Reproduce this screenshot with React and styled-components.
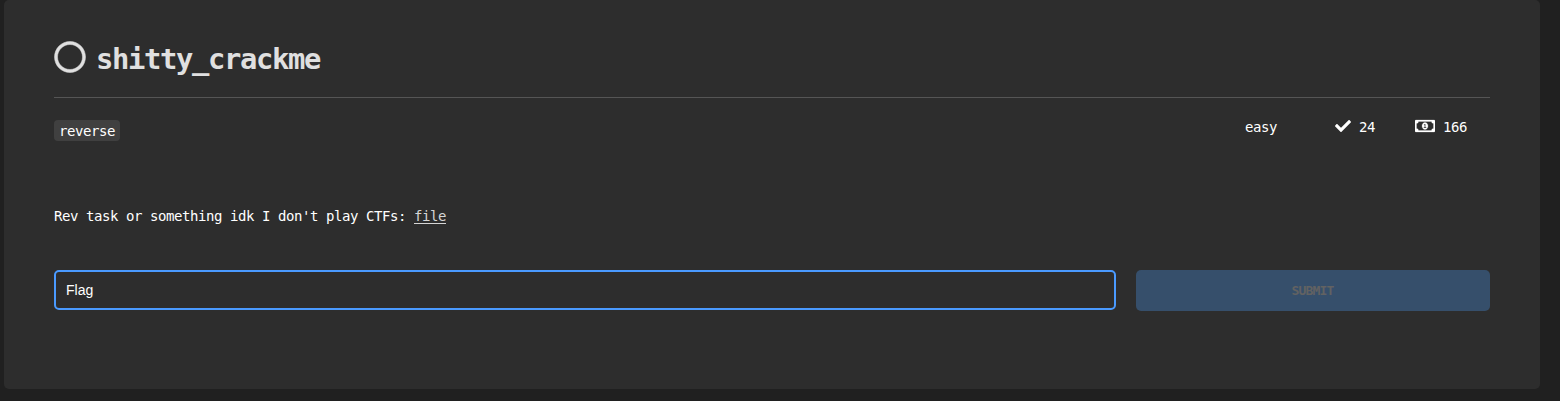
import React from 'react';
import styled, { createGlobalStyle } from 'styled-components';
import { FaCheck, FaRegCircle, FaRegMoneyBillAlt } from 'react-icons/fa';

const GlobalStyle = createGlobalStyle`
  *, *::before, *::after { box-sizing: border-box; }
  body {
    margin: 0;
    height: 401px;
    overflow: hidden;
    background: #202020;
    color: #fff;
    font: 14px/20px "DejaVu Sans Mono", "Liberation Mono", monospace;
    letter-spacing: -0.429px;
  }
`;

const Card = styled.main`
  width: 1536px;
  height: 389px;
  margin: 0 20px 0 4px;
  padding: 0 50px;
  border-radius: 5px;
  background: #2d2d2d;
`;

const Header = styled.header`
  display: flex;
  height: 98px;
  padding-top: 41px;
  border-bottom: 1px solid #555;
  color: #e0e0e0;
`;

const StatusIcon = styled(FaRegCircle)`
  flex: none;
  width: 32px;
  height: 32px;

  path {
    stroke: currentColor;
    stroke-width: 8px;
  }
`;

const Title = styled.h1`
  margin: 0 0 0 10px;
  font-size: 28.8px;
  line-height: 36px;
  letter-spacing: -1.338px;
  font-weight: 700;
`;

const Meta = styled.div`
  display: flex;
  justify-content: space-between;
  align-items: flex-start;
  height: 108px;
  padding-right: 23px;
`;

const Tag = styled.span`
  height: 21px;
  margin-top: 22px;
  padding: 1px 5px 0;
  border-radius: 4px;
  background: #404040;
  line-height: 21px;
`;

const Stats = styled.div`
  display: flex;
  margin-top: 19px;
`;

const Stat = styled.span`
  display: flex;
  align-items: center;
  gap: 8px;
  margin-left: ${({ $gap }) => $gap || 0}px;

  svg {
    width: ${({ $icon }) => $icon || 16}px;
    height: 16px;
    margin-bottom: 2px;
  }

  path {
    stroke: currentColor;
    stroke-width: ${({ $bold }) => $bold || 0}px;
  }
`;

const Description = styled.p`
  margin: 0;
  height: 64px;
  white-space: pre;
`;

const FileLink = styled.a`
  color: #d5d5d5;
  text-decoration: underline;
  text-underline-offset: 2px;
`;

const Form = styled.form`
  display: flex;
  gap: 20px;
`;

const FlagInput = styled.input`
  width: 1062px;
  height: 40px;
  padding: 0 10px;
  border: 2px solid #4a9aff;
  border-radius: 5px;
  outline: none;
  background: #2d2d2d;
  color: #fff;
  font: 14px "Liberation Sans", Arial, sans-serif;

  &::placeholder { color: #fff; opacity: 1; }
`;

const SubmitButton = styled.button`
  flex: 1;
  height: 41px;
  padding: 0 1px 1px 0;
  border: 0;
  border-radius: 5px;
  background: #364f6b;
  color: #626262;
  font: 700 13px "DejaVu Sans Mono", monospace;
  letter-spacing: -0.83px;
`;

export default function App() {
  return (
    <>
      <GlobalStyle />
      <Card>
        <Header>
          <StatusIcon />
          <Title>shitty_crackme</Title>
        </Header>
        <Meta>
          <Tag>reverse</Tag>
          <Stats>
            <Stat>easy</Stat>
            <Stat $gap={58}><FaCheck />24</Stat>
            <Stat $gap={40} $icon={20} $bold={8}><FaRegMoneyBillAlt />166</Stat>
          </Stats>
        </Meta>
        <Description>
          Rev task or something idk I don't play CTFs: <FileLink>file</FileLink>
        </Description>
        <Form>
          <FlagInput placeholder="Flag" />
          <SubmitButton type="button" disabled>SUBMIT</SubmitButton>
        </Form>
      </Card>
    </>
  );
}
